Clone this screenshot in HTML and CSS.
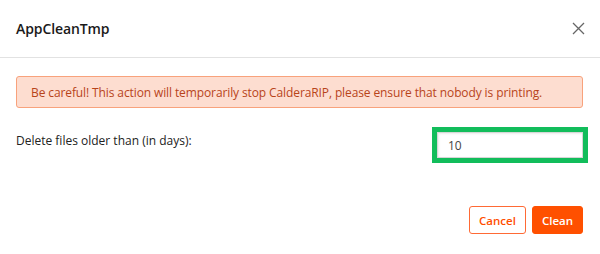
FILE: index.html
```html
<!DOCTYPE html>
<html lang="en">

<head>
    <meta charset="UTF-8">
    <meta name="viewport" content="width=device-width, initial-scale=1.0">

    <title>AppCleanTmp</title>
    <link rel="stylesheet" href="styles.css">
</head>

<body>

    <div class="modal">

        <div class="modal-header">
            <h2 class="modal-title">AppCleanTmp</h2>
            <button class="close" aria-label="Close">
                <svg width="13" height="13" viewBox="0 0 13 13">
                    <path d="M1 1 L12 12 M12 1 L1 12" stroke="#666" stroke-width="1.3" fill="none" />
                </svg>
            </button>
        </div>

        <div class="modal-body">

            <div class="alert">Be careful! This action will temporarily stop CalderaRIP, please ensure that nobody is printing.</div>

            <div class="form-row">
                <label for="days">Delete files older than (in days):</label>
                <input type="text" id="days" value="10">
            </div>

        </div>

        <div class="modal-footer">
            <button class="btn btn-outline">Cancel</button>
            <button class="btn btn-primary">Clean</button>
        </div>

    </div>

</body>

</html>
```

FILE: styles.css
```css
* {
    margin: 0;
    padding: 0;
    box-sizing: border-box;
}

body {
    background-color: white;
    font-family: "Open Sans", "Noto Sans", sans-serif;
    color: #222;
}

.modal {
    width: 600px;
    height: 254px;
}

.modal-header {
    display: flex;
    justify-content: space-between;
    align-items: center;
    height: 58px;
    padding: 0 16px;
    border-bottom: 1px solid #e2e2e2;
}

.modal-title {
    font-size: 14px;
    font-weight: 600;
    color: #1a1a1a;
    letter-spacing: -0.1px;
}

.close {
    border: none;
    background: none;
    display: flex;
    margin-right: -1px;
    cursor: pointer;
}

.modal-body {
    padding: 18px 17px 0 16px;
}

.alert {
    height: 32px;
    display: flex;
    align-items: center;
    padding: 0 14px;
    background-color: #fdddd0;
    border: 1px solid #f8a27c;
    border-radius: 3px;
    color: #b8441a;
    font-size: 12px;
    letter-spacing: -0.11px;
}

.form-row {
    display: flex;
    justify-content: space-between;
    align-items: flex-start;
    margin-top: 24px;
}

.form-row label {
    font-size: 12px;
    color: #222;
}

.form-row input {
    width: 146px;
    height: 26px;
    border: 1px solid #d6d6d6;
    box-shadow: inset 1px 1px 2px rgba(0, 0, 0, 0.08);
    padding: 0 10px;
    font-family: inherit;
    font-size: 12px;
    color: #444;
    outline: 5px solid #12bd5b;
}

.modal-footer {
    display: flex;
    justify-content: flex-end;
    gap: 6px;
    padding: 48px 17px 0 16px;
}

.btn {
    height: 28px;
    padding: 0 9px;
    border-radius: 3px;
    font-family: inherit;
    font-size: 11.5px;
    font-weight: 600;
    cursor: pointer;
}

.btn-outline {
    background-color: white;
    border: 1px solid #ff6a35;
    color: #ff4e00;
}

.btn-primary {
    background-color: #ff5000;
    border: 1px solid #ff5000;
    color: white;
}
```
